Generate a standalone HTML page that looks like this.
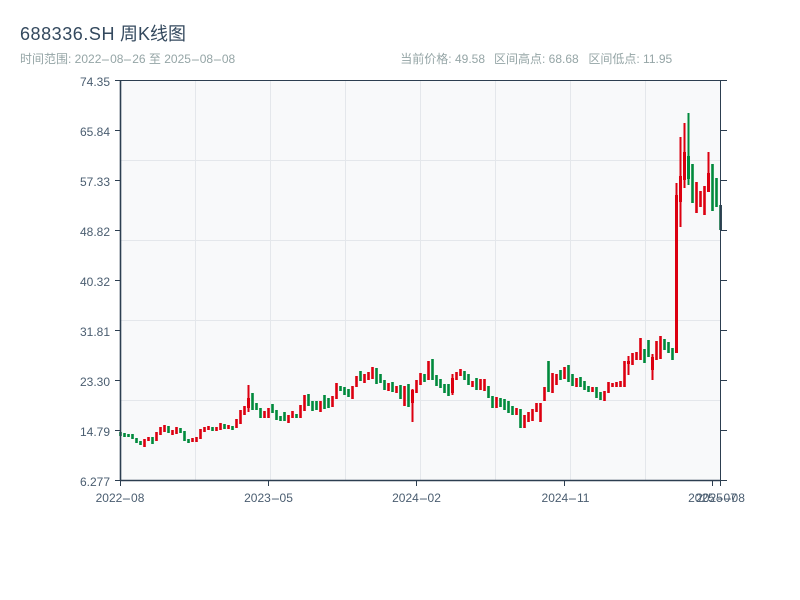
<!DOCTYPE html>
<html><head><meta charset="utf-8"><style>
html,body{margin:0;padding:0;background:#fff}
body{width:800px;height:600px;overflow:hidden;position:relative;font-family:"Liberation Sans","Noto Sans CJK SC",sans-serif}
svg{position:absolute;left:0;top:0}
.l{position:absolute;white-space:nowrap;line-height:14px;font-size:12px;color:#95a5a6}
.y{position:absolute;left:50px;width:60px;text-align:right;font-size:12px;line-height:14px;color:#4a5d70}
.x{position:absolute;width:100px;text-align:center;font-size:12px;line-height:14px;color:#4a5d70;top:491px}
i{display:inline-block;width:8.75px;font-style:normal;text-align:center;transform:scaleX(2.4)}
</style></head><body>
<svg width="800" height="600" viewBox="0 0 800 600">
<rect x="120" y="80" width="600" height="400" fill="#f8f9fa"/>
<path d="M195.5 80V480M270.5 80V480M345.5 80V480M420.5 80V480M495.5 80V480M570.5 80V480M645.5 80V480M120 160.5H720M120 240.5H720M120 320.5H720M120 400.5H720" stroke="#e4e7eb" stroke-width="1" fill="none"/>
<g id="c"></g>
<path d="M115 80.5H721M120.5 80V486M115 480.5H721M720.5 80V486M115 130.5H120M115 180.5H120M115 230.5H120M115 280.5H120M115 330.5H120M115 380.5H120M115 430.5H120M721 80.5H727M721 130.5H727M721 180.5H727M721 230.5H727M721 280.5H727M721 330.5H727M721 380.5H727M721 430.5H727M721 480.5H727M268.5 481V486M416.5 481V486M564.5 481V486M712.5 481V486" stroke="#2c3e50" stroke-width="1" fill="none"/>
<path d="M120.5 80V481M120 480.5H721" stroke="#2c3e50" stroke-width="1.6" fill="none"/>
<path d="M720.8 205V230" stroke="#2c3e50" stroke-width="2.2" fill="none"/>
</svg>
<div class="l" style="left:20px;top:23px;font-size:18px;line-height:22px;color:#34495e;"><span style="letter-spacing:.55px">688336.SH</span> 周K线图</div>
<div class="l" style="left:20px;top:52px">时间范围: 2022<i>-</i>08<i>-</i>26 至 2025<i>-</i>08<i>-</i>08</div>
<div class="l" style="left:400.3px;top:52px">当前价格: 49.58</div>
<div class="l" style="left:494px;top:52px">区间高点: 68.68</div>
<div class="l" style="left:588.4px;top:52px">区间低点: 11.95</div>
<div class="y" style="top:75px">74.35</div><div class="y" style="top:125px">65.84</div><div class="y" style="top:175px">57.33</div><div class="y" style="top:225px">48.82</div><div class="y" style="top:275px">40.32</div><div class="y" style="top:325px">31.81</div><div class="y" style="top:375px">23.30</div><div class="y" style="top:425px">14.79</div><div class="y" style="top:475px">6.277</div>
<div class="x" style="left:70px">2022<i>-</i>08</div><div class="x" style="left:218.5px">2023<i>-</i>05</div><div class="x" style="left:366.5px">2024<i>-</i>02</div><div class="x" style="left:515.5px">2024<i>-</i>11</div><div class="x" style="left:662.5px">2025<i>-</i>07</div><div class="x" style="left:670.5px">2025<i>-</i>08</div>
<script>
var d="432 436 g,433 437 g,434 437 g,434 439 g,438 443 g,441 445 g,439 447 r,437 441 r,437 444 g,432 441 r,427 435 r,425 432 r,426 433 g,430 435 r,427 434 r,428 433 g,431 441 g,439 443 g,438 442 r,437 442 r,429 439 r,427 432 r,426 430 r,427 431 g,427 431 r,423 430 r,424 429 g,425 429 r,426 430 g,419 428 r,410 424 r,406 415 r,385 412 r,393 410 g,403 410 g,408 418 g,411 418 r,408 418 r,404 413 g,410 420 g,416 421 g,412 421 g,415 423 r,411 418 r,414 418 g,405 418 r,395 411 r,394 406 g,401 411 g,401 410 g,401 412 r,395 409 g,398 408 g,396 407 r,383 399 r,386 391 g,387 395 g,389 397 g,386 399 r,376 387 r,371 381 g,374 383 r,372 380 r,367 379 r,368 384 g,374 383 g,380 390 g,383 391 r,382 392 g,386 393 r,385 399 g,386 406 r,384 407 g,389 422 r,380 393 r,373 385 r,374 382 g,361 380 r,359 380 g,375 386 g,379 388 g,384 393 g,384 396 g,374 395 r,372 380 r,369 376 r,371 380 g,374 385 g,381 387 r,378 390 g,379 390 r,379 391 r,386 398 g,396 408 g,397 408 r,398 407 g,399 410 g,401 413 g,406 415 g,408 415 r,409 428 g,415 428 r,412 422 r,409 421 r,403 412 r,403 422 r,387 401 r,361 392 g,373 393 r,374 385 r,370 380 g,367 379 r,365 382 g,374 386 g,378 387 r,377 387 g,381 390 g,386 392 g,387 392 r,387 398 g,392 400 g,391 401 r,382 393 r,383 387 r,382 387 r,381 387 r,361 387 r,356 375 r,353 365 r,352 360 r,338 360 r,349 363 g,340 357 g,354 380 r,341 360 r,336 359 r,339 350 g,342 353 g,348 360 g,183 353 r,137 227 r,123 188 r,113 185 g,164 203 g,182 213 r,191 207 r,186 215 r,152 192 r,164 211 g,178 207 g,205 230 g".split(",");
var b={32:[398,408],73:[390,403],127:[361,364],133:[357,370],139:[195,353],140:[176,202],141:[152,180],142:[156,179],147:[173,192],83:[378,393]};
var o="";
for(var i=0;i<d.length;i++){var p=d[i].split(" "),x=120.5+4*i,col=p[2]=="g"?"#008a3c":"#dc0010";
var w=b[i]?2:2.6;
o+='<path d="M'+x+' '+p[0]+'V'+p[1]+'" stroke="'+col+'" stroke-width="'+w+'"/>';
if(b[i])o+='<path d="M'+x+' '+b[i][0]+'V'+b[i][1]+'" stroke="'+col+'" stroke-width="3"/>';}
document.getElementById("c").innerHTML=o;
</script>
</body></html>
